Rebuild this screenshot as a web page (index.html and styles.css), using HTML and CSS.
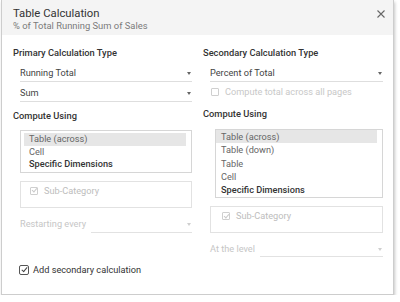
FILE: index.html
```html
<!DOCTYPE html>
<html lang="en">
<head>
    <meta charset="UTF-8">
    <title>Table Calculation</title>
    <link rel="stylesheet" href="styles.css">
</head>
<body>
    <div class="dialog">
        <div class="header">
            <div class="title">Table Calculation</div>
            <div class="subtitle">% of Total Running Sum of Sales</div>
            <span class="close">
                <svg width="8" height="8" viewBox="0 0 8 8"><path d="M0.5 0.5 L7.5 7.5 M7.5 0.5 L0.5 7.5" stroke="#666" stroke-width="1.1"/></svg>
            </span>
        </div>
        <div class="body">
            <div class="col">
                <div class="label">Primary Calculation Type</div>
                <div class="select first">Running Total<span class="arrow"></span></div>
                <div class="select second">Sum<span class="arrow"></span></div>
                <div class="label compute">Compute Using</div>
                <ul class="list">
                    <li class="sel">Table (across)</li>
                    <li>Cell</li>
                    <li class="bold">Specific Dimensions</li>
                </ul>
                <div class="dims"><span class="check small checked"></span>Sub-Category</div>
                <div class="inline">
                    <span class="inline-label">Restarting every</span>
                    <div class="select grow"><span class="arrow"></span></div>
                </div>
                <div class="add">
                    <span class="check checked"></span>Add secondary calculation
                </div>
            </div>
            <div class="col">
                <div class="label">Secondary Calculation Type</div>
                <div class="select first">Percent of Total<span class="arrow"></span></div>
                <div class="option"><span class="check small"></span>Compute total across all pages</div>
                <div class="label compute-right">Compute Using</div>
                <ul class="list tall">
                    <li class="sel">Table (across)</li>
                    <li>Table (down)</li>
                    <li>Table</li>
                    <li>Cell</li>
                    <li class="bold">Specific Dimensions</li>
                </ul>
                <div class="dims right"><span class="check small checked"></span>Sub-Category</div>
                <div class="inline">
                    <span class="inline-label">At the level</span>
                    <div class="select grow short"><span class="arrow"></span></div>
                </div>
            </div>
        </div>
    </div>
</body>
</html>
```

FILE: styles.css
```css
body {
    margin: 0;
    background: #ffffff;
    font-family: 'Roboto', 'Noto Sans', sans-serif;
    font-size: 9.2px;
    color: #333;
}

.dialog {
    width: 393px;
    height: 295px;
    margin-left: 1px;
    border: 1px solid #cdcdcd;
    border-top: none;
    box-shadow: 1px 2px 3px rgba(0, 0, 0, 0.22);
    background: #fff;
    box-sizing: border-box;
}

.header {
    position: relative;
    height: 35px;
    background: #f4f4f4;
    padding: 7px 0 0 11px;
    box-sizing: border-box;
}

.title {
    font-size: 11.3px;
    line-height: 13px;
    color: #333;
}

.subtitle {
    font-size: 9.4px;
    line-height: 12px;
    color: #7a7a7a;
}

.close {
    position: absolute;
    right: 8px;
    top: 10px;
    line-height: 0;
}

.body {
    display: grid;
    grid-template-columns: 179px 180px;
    column-gap: 11px;
    padding: 12px 0 0 11px;
}

.label {
    font-size: 9.3px;
    font-weight: 500;
    line-height: 12px;
    color: #333;
}

.label.compute {
    margin-top: 8px;
}

.label.compute-right {
    margin-top: 10px;
}

.select {
    position: relative;
    margin-left: 7px;
    height: 14px;
    line-height: 12px;
    border-bottom: 1px solid #dedede;
    color: #444;
}

.select.first {
    margin-top: 8px;
}

.select.second {
    margin-top: 5px;
}

.arrow {
    position: absolute;
    right: 1px;
    top: 5px;
    border-left: 2.5px solid transparent;
    border-right: 2.5px solid transparent;
    border-top: 3px solid #666;
}

.list {
    list-style: none;
    margin: 8px 0 0 7px;
    padding: 2px 0 0;
    height: 38.5px;
    border: 1px solid #d6d6d6;
}

.list li {
    line-height: 12.5px;
    margin: 0 5px 0 3px;
    padding-left: 5px;
    color: #666;
}

.list li.sel {
    background: #e6e6e6;
}

.list li.bold {
    font-weight: 500;
    color: #333;
}

.list.tall {
    margin: 9px 0 0 12px;
    padding-top: 0;
    height: 67px;
}

.list.tall li {
    line-height: 13.25px;
    margin-left: 0;
}

.dims {
    margin: 8px 0 0 7px;
    height: 27px;
    border: 1px solid #e2e2e2;
    box-sizing: border-box;
    padding: 3px 0 0 9px;
    color: #bdbdbd;
    display: flex;
    align-items: flex-start;
    gap: 6px;
    line-height: 12px;
}

.dims .check {
    margin-top: 2px;
}

.dims.right {
    padding-left: 11px;
}

.check {
    display: inline-block;
    width: 8px;
    height: 8px;
    border: 1px solid #555;
    border-radius: 2px;
    position: relative;
    flex: none;
}

.check.small {
    width: 6px;
    height: 6px;
    border-color: #cfcfcf;
    border-radius: 1px;
}

.check.checked::after {
    content: "";
    position: absolute;
    left: 2.5px;
    top: 0px;
    width: 2px;
    height: 5px;
    border-right: 1.2px solid #444;
    border-bottom: 1.2px solid #444;
    transform: rotate(40deg);
}

.check.small.checked::after {
    left: 1.5px;
    top: -0.5px;
    width: 1.5px;
    height: 4px;
    border-color: #c8c8c8;
}

.inline {
    display: flex;
    align-items: flex-start;
    margin: 10px 0 0 7px;
    color: #c6c6c6;
}

.inline-label {
    margin-right: 5px;
    line-height: 12px;
}

.select.grow {
    flex: 1;
    margin: 0;
}

.select.grow.short {
    height: 13px;
}

.inline .arrow {
    border-top-color: #cfcfcf;
}

.inline .select {
    border-bottom-color: #e2e2e2;
}

.option {
    display: flex;
    align-items: center;
    gap: 6px;
    margin: 4px 0 0 8px;
    line-height: 12px;
    color: #c8c8c8;
}

.add {
    display: flex;
    align-items: center;
    gap: 4px;
    margin: 31px 0 0 6px;
    line-height: 12px;
    color: #333;
}
```
